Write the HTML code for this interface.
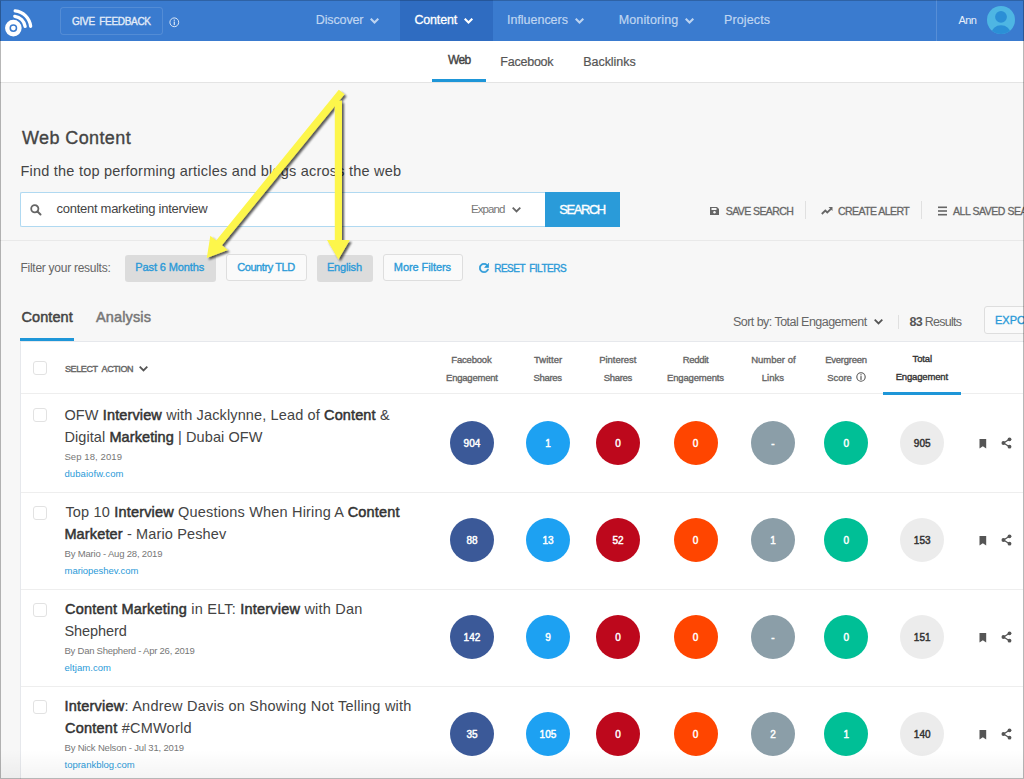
<!DOCTYPE html>
<html><head><meta charset="utf-8">
<style>
*{margin:0;padding:0;box-sizing:border-box}
html,body{width:1024px;height:779px;overflow:hidden;background:#f7f7f7;font-family:"Liberation Sans",sans-serif;color:#444}
.a{position:absolute;white-space:nowrap}
#nav{position:absolute;left:0;top:0;width:1024px;height:41px;background:#3a7bcf}
#sub{position:absolute;left:0;top:41px;width:1024px;height:42px;background:#fff;border-bottom:1px solid #e4e4e4}
.navt{font-size:12.5px;color:#bfd5f1;top:13px;-webkit-text-stroke-width:0.2px}
.chev{position:absolute;width:6px;height:6px;border-right:2px solid currentColor;border-bottom:2px solid currentColor;transform:rotate(45deg)}
.btnf{position:absolute;height:27px;border-radius:3px;font-size:11px;-webkit-text-stroke-width:0.35px;color:#2b9ad8;text-align:center;line-height:27px}
.btnf.g{background:#dcdcdc}
.btnf.w{background:#fafafa;border:1px solid #dedede;line-height:25px}
.card{position:absolute;left:20px;top:341px;width:1010px;height:440px;background:#fff;border:1px solid #e6e8ec}
.hd{font-size:9.5px;-webkit-text-stroke-width:0.35px;color:#666;text-align:center;line-height:18px}
.row{position:absolute;left:0;width:1010px;border-top:1px solid #eeeeee}
.cb{position:absolute;width:14.3px;height:14.3px;border:1px solid #e2e2e2;border-radius:3px;background:#fff}
.ttl{font-size:14.5px;line-height:21px;color:#444}
.ttl b{color:#333;font-weight:normal;-webkit-text-stroke-width:0.5px}
.meta{font-size:9.5px;color:#777}
.dom{font-size:9.5px;color:#2b9ad8}
.fb{background:#3b5998}.tw{background:#1da1f2}.pi{background:#bd081c}.rd{background:#ff4500}.ln{background:#8b9ea8}.ev{background:#00bf96}.tt{background:#ececec;color:#333!important}
.c{position:absolute;width:44px;height:44px;border-radius:50%;color:#fff;font-size:10px;-webkit-text-stroke-width:0.45px;text-align:center;line-height:45px;letter-spacing:0.1px;text-indent:0.1px}
/*FIT*/#n1{letter-spacing:-0.13px;transform:translate(-0.2px,0.0px)}
#n2{letter-spacing:-0.16px;transform:translate(0.4px,0.0px)}
#n3{letter-spacing:-0.02px;transform:translate(-1.0px,0.0px)}
#n4{letter-spacing:0.13px;transform:translate(-0.3px,0.0px)}
#n5{letter-spacing:0.12px;transform:translate(-1.0px,0.0px)}
#gf{letter-spacing:-0.30px;transform:translate(-0.1px,1.0px)}
#ann{letter-spacing:-0.64px;transform:translate(0.6px,1.0px)}
#s1{letter-spacing:-0.70px;transform:translate(1.0px,0.0px)}
#s2{letter-spacing:-0.23px;transform:translate(0.3px,1.0px)}
#s3{letter-spacing:-0.03px;transform:translate(0.2px,1.0px)}
#wc{letter-spacing:0.39px;transform:translate(1.0px,1.0px)}
#find{letter-spacing:0.22px;transform:translate(-0.5px,1.0px)}
#q{letter-spacing:-0.27px;transform:translate(0.5px,-1.0px)}
#srch{letter-spacing:-1.42px;transform:translate(-0.5px,0.0px)}
#exp{letter-spacing:-0.90px;transform:translate(0.0px,0.0px)}
#sav{letter-spacing:-0.57px;transform:translate(0.7px,0.0px)}
#cre{letter-spacing:-0.55px;transform:translate(0.0px,0.0px)}
#flt{letter-spacing:-0.27px;transform:translate(-0.5px,-1.0px)}
#f1{letter-spacing:-0.12px;transform:translate(-0.8px,-1.0px)}
#f2{letter-spacing:-0.41px;transform:translate(-0.5px,0.0px)}
#f3{letter-spacing:-0.16px;transform:translate(-0.6px,-1.0px)}
#f4{letter-spacing:-0.08px;transform:translate(-0.6px,0.0px)}
#rst{letter-spacing:-0.49px;transform:translate(0.2px,1.0px)}
#tc{letter-spacing:0.07px;transform:translate(0.5px,1.0px)}
#ta{letter-spacing:0.13px;transform:translate(1.0px,1.0px)}
#sort{letter-spacing:-0.54px;transform:translate(-0.0px,1.0px)}
#res{letter-spacing:-0.72px;transform:translate(0.5px,1.0px)}
#sel{letter-spacing:-0.40px;transform:translate(-0.0px,0.0px)}
#h0a{letter-spacing:-0.19px;transform:translate(-0.5px,0.0px)}
#h0b{letter-spacing:-0.22px;transform:translate(-0.0px,1.0px)}
#h1a{letter-spacing:0.01px;transform:translate(0.0px,0.0px)}
#h1b{letter-spacing:-0.31px;transform:translate(-0.5px,1.0px)}
#h2a{letter-spacing:-0.05px;transform:translate(0.0px,0.0px)}
#h2b{letter-spacing:-0.30px;transform:translate(0.0px,1.0px)}
#h3a{letter-spacing:-0.30px;transform:translate(0.0px,0.0px)}
#h3b{letter-spacing:-0.16px;transform:translate(0.0px,1.0px)}
#h4a{letter-spacing:0.00px;transform:translate(0.0px,0.0px)}
#h4b{letter-spacing:0.02px;transform:translate(-0.5px,1.0px)}
#h5a{letter-spacing:-0.26px;transform:translate(-0.0px,0.0px)}
#h5b{letter-spacing:-0.09px;transform:translate(-6.5px,1.0px)}
#h6a{letter-spacing:-0.14px;transform:translate(0.5px,-1.0px)}
#h6b{letter-spacing:-0.16px;transform:translate(0.0px,0.0px)}
#r0a{letter-spacing:0.13px;transform:translate(-0.6px,0.0px)}
#r0b{letter-spacing:0.09px;transform:translate(-0.6px,1.0px)}
#r0c{letter-spacing:0.09px;transform:translate(-0.6px,1.0px)}
#r0d{letter-spacing:0.09px;transform:translate(-0.6px,1.0px)}
#r1a{letter-spacing:0.18px;transform:translate(0.4px,0.0px)}
#r1b{letter-spacing:0.14px;transform:translate(-0.6px,1.0px)}
#r1c{letter-spacing:-0.18px;transform:translate(-0.5px,1.0px)}
#r1d{letter-spacing:-0.03px;transform:translate(-0.5px,1.0px)}
#r2a{letter-spacing:0.21px;transform:translate(0.0px,0.0px)}
#r2b{letter-spacing:-0.08px;transform:translate(-0.5px,1.0px)}
#r2c{letter-spacing:-0.24px;transform:translate(-0.5px,1.0px)}
#r2d{letter-spacing:0.06px;transform:translate(-0.5px,1.0px)}
#r3a{letter-spacing:0.22px;transform:translate(-0.5px,0.0px)}
#r3b{letter-spacing:0.23px;transform:translate(0.0px,1.0px)}
#r3c{letter-spacing:-0.18px;transform:translate(-0.5px,1.0px)}
#r3d{letter-spacing:0.00px;transform:translate(-0.5px,1.0px)}/*ENDFIT*/
</style></head><body>
<!-- NAV -->
<div id="nav">
  <svg class="a" style="left:0;top:0" width="40" height="40" viewBox="0 0 40 40">
    <circle cx="13.35" cy="28.1" r="6.1" fill="none" stroke="#fff" stroke-width="4.4"/>
    <circle cx="13.35" cy="28.1" r="2.4" fill="#fff"/>
    <path d="M14.8 16.29A11.9 11.9 0 0 1 25.13 26.44" fill="none" stroke="#fff" stroke-width="3.3" stroke-linecap="round"/>
    <path d="M15.17 10.8A17.4 17.4 0 0 1 30.65 26.28" fill="none" stroke="#fff" stroke-width="3.3" stroke-linecap="round"/>
  </svg>
  <div class="a" style="left:60px;top:7px;width:103px;height:28px;border:1px solid rgba(255,255,255,0.13);border-radius:3px;font-size:10px;-webkit-text-stroke-width:0.35px;color:#e3ecf8;text-align:center;line-height:26px;word-spacing:2px"><span id="gf" style="display:inline-block">GIVE FEEDBACK</span></div>
  <svg class="a" style="left:169px;top:17px" width="11" height="11" viewBox="0 0 11 11"><circle cx="5.3" cy="5.3" r="4.4" fill="none" stroke="#dce8f7" stroke-width="1"/><rect x="4.7" y="2.6" width="1.2" height="1.2" fill="#dce8f7"/><rect x="4.7" y="4.5" width="1.2" height="3.6" fill="#dce8f7"/></svg>

  <div id="n1" class="a navt" style="left:316px">Discover</div>
  <svg class="a" style="left:370px;top:17.5px" width="10" height="7" viewBox="0 0 10 7"><path d="M0.7 0.7L4.5 4.5L8.3 0.7" fill="none" stroke="#bcd3f0" stroke-width="2.1"/></svg>
  <div class="a" style="left:400px;top:0;width:93px;height:41px;background:#2f6cc1"></div>
  <div id="n2" class="a navt" style="left:414px;color:#fff;-webkit-text-stroke-width:0.3px">Content</div>
  <svg class="a" style="left:464px;top:17.5px" width="10" height="7" viewBox="0 0 10 7"><path d="M0.7 0.7L4.5 4.5L8.3 0.7" fill="none" stroke="#fff" stroke-width="2.1"/></svg>
  <div id="n3" class="a navt" style="left:508px">Influencers</div>
  <svg class="a" style="left:575px;top:17.5px" width="10" height="7" viewBox="0 0 10 7"><path d="M0.7 0.7L4.5 4.5L8.3 0.7" fill="none" stroke="#bcd3f0" stroke-width="2.1"/></svg>
  <div id="n4" class="a navt" style="left:619px">Monitoring</div>
  <svg class="a" style="left:685px;top:17.5px" width="10" height="7" viewBox="0 0 10 7"><path d="M0.7 0.7L4.5 4.5L8.3 0.7" fill="none" stroke="#bcd3f0" stroke-width="2.1"/></svg>
  <div id="n5" class="a navt" style="left:725px">Projects</div>
  <div class="a" style="left:936px;top:0;width:1px;height:41px;background:rgba(255,255,255,0.15)"></div>
  <div id="ann" class="a" style="left:958px;top:13px;font-size:11px;color:#e6eefa">Ann</div>
  <svg class="a" style="left:987px;top:6px" width="28" height="28" viewBox="0 0 28 28">
    <defs><clipPath id="av"><circle cx="14" cy="14" r="14"/></clipPath></defs>
    <circle cx="14" cy="14" r="14" fill="#4eb6e3"/>
    <g clip-path="url(#av)"><circle cx="14" cy="10.8" r="5.9" fill="#2b8fd6"/><ellipse cx="14" cy="27.3" rx="9.6" ry="8" fill="#2b8fd6"/></g>
  </svg>
</div>
<!-- SUBNAV -->
<div id="sub">
  <div class="a" style="left:447px;top:12px;font-size:12px;-webkit-text-stroke-width:0.4px;color:#444" id="s1">Web</div>
  <div class="a" style="left:432px;top:38px;width:54px;height:3px;background:#1e96d8"></div>
  <div class="a" style="left:500px;top:13px;font-size:12.5px;color:#555;-webkit-text-stroke-width:0.2px" id="s2">Facebook</div>
  <div class="a" style="left:583px;top:13px;font-size:12.5px;color:#555;-webkit-text-stroke-width:0.2px" id="s3">Backlinks</div>
</div>

<!-- TITLE -->
<div class="a" style="left:21px;top:127px;font-size:18px;-webkit-text-stroke-width:0.35px;color:#444" id="wc">Web Content</div>
<div class="a" style="left:21px;top:162px;font-size:14.5px;color:#444" id="find">Find the top performing articles and blogs across the web</div>

<!-- SEARCH -->
<div class="a" style="left:20px;top:192px;width:526px;height:35px;background:#fff;border:1px solid #b0d9f1;border-right:none;border-radius:2px 0 0 2px"></div>
<svg class="a" style="left:29.7px;top:203.8px" width="12" height="12" viewBox="0 0 12 12"><circle cx="4.8" cy="4.8" r="3.6" fill="none" stroke="#666" stroke-width="1.8"/><path d="M7.5 7.5 L10.5 10.5" stroke="#666" stroke-width="2" stroke-linecap="round"/></svg>
<div class="a" style="left:56px;top:202px;font-size:13px;color:#444" id="q">content marketing interview</div>
<div class="a" style="left:471px;top:203px;font-size:11.5px;color:#777" id="exp">Expand</div>
<svg class="a" style="left:512px;top:207px" width="10" height="7" viewBox="0 0 10 7"><path d="M0.7 0.7L4.5 4.5L8.3 0.7" fill="none" stroke="#666" stroke-width="1.8"/></svg>
<div class="a" style="left:545px;top:192px;width:75px;height:35px;background:#2a9bd9;color:#fff;font-size:13px;-webkit-text-stroke-width:0.35px;text-align:center;line-height:35px"><span id="srch" style="display:inline-block">SEARCH</span></div>

<!-- SAVE etc -->
<svg class="a" style="left:710px;top:207px" width="9" height="8" viewBox="0 0 9 8"><path d="M0 0H7L9 2V8H0Z" fill="#666"/><rect x="1.5" y="1" width="5" height="2" fill="#f7f7f7"/><circle cx="4.5" cy="5.3" r="1.2" fill="#f7f7f7"/></svg>
<div class="a" style="left:725px;top:205px;font-size:10.5px;color:#666;-webkit-text-stroke-width:0.3px" id="sav">SAVE SEARCH</div>
<div class="a" style="left:805px;top:201px;width:1px;height:18px;background:#e0e0e0"></div>
<svg class="a" style="left:821px;top:206px" width="12" height="9" viewBox="0 0 12 9"><path d="M0.8 8 L4.3 4.5 L6.3 6.5 L10.5 2.3" fill="none" stroke="#666" stroke-width="1.8"/><path d="M7.5 1 H11.5 V5 Z" fill="#666"/></svg>
<div class="a" style="left:838px;top:205px;font-size:10.5px;color:#666;-webkit-text-stroke-width:0.3px" id="cre">CREATE ALERT</div>
<div class="a" style="left:921px;top:201px;width:1px;height:18px;background:#e0e0e0"></div>
<svg class="a" style="left:938px;top:206px" width="9" height="10" viewBox="0 0 9 10"><rect y="0.5" width="9" height="1.6" fill="#666"/><rect y="4.2" width="9" height="1.6" fill="#666"/><rect y="7.9" width="9" height="1.6" fill="#666"/></svg>
<div class="a" style="left:953px;top:205px;font-size:10.5px;color:#666;-webkit-text-stroke-width:0.3px;letter-spacing:-0.45px" id="all">ALL SAVED SEARCHES</div>
<div class="a" style="left:0;top:240px;width:1024px;height:1px;background:#e9e9e9"></div>

<!-- FILTERS -->
<div class="a" style="left:21px;top:262px;font-size:12px;color:#666" id="flt">Filter your results:</div>
<div class="btnf g" style="left:125px;top:255px;width:91px"><span id="f1" style="display:inline-block">Past 6 Months</span></div>
<div class="btnf w" style="left:226px;top:254px;width:81px"><span id="f2" style="display:inline-block">Country TLD</span></div>
<div class="btnf g" style="left:317px;top:255px;width:56px"><span id="f3" style="display:inline-block">English</span></div>
<div class="btnf w" style="left:383px;top:254px;width:80px"><span id="f4" style="display:inline-block">More Filters</span></div>
<svg class="a" style="left:478.8px;top:262.8px" width="10" height="10" viewBox="3.5 3.5 17 17"><path d="M17.65 6.35C16.2 4.9 14.21 4 12 4c-4.42 0-7.99 3.58-7.99 8s3.57 8 7.99 8c3.73 0 6.84-2.550 7.73-6h-2.080c-.82 2.33-3.04 4-5.65 4-3.31 0-6-2.69-6-6s2.69-6 6-6c1.66 0 3.14.69 4.22 1.78L13 11h7V4l-2.35 2.35z" fill="#2b9ad8" stroke="#2b9ad8" stroke-width="1.1"/></svg>
<div class="a" style="left:494px;top:262px;font-size:10px;-webkit-text-stroke-width:0.35px;color:#2b9ad8;word-spacing:2px" id="rst">RESET FILTERS</div>

<!-- TABS -->
<div class="a" style="left:21px;top:308px;font-size:14.5px;-webkit-text-stroke-width:0.5px;color:#444" id="tc">Content</div>
<div class="a" style="left:95px;top:308px;font-size:14.5px;-webkit-text-stroke-width:0.5px;color:#777" id="ta">Analysis</div>
<div class="a" style="left:20px;top:338px;width:54px;height:3px;background:#1e96d8"></div>
<div class="a" style="left:733px;top:314px;font-size:12.5px;color:#666" id="sort">Sort by: Total Engagement</div>
<svg class="a" style="left:873.5px;top:319.3px" width="10" height="7" viewBox="0 0 10 7"><path d="M0.7 0.7L4.5 4.5L8.3 0.7" fill="none" stroke="#555" stroke-width="1.8"/></svg>
<div class="a" style="left:898px;top:315px;width:1px;height:14px;background:#e0e0e0"></div>
<div class="a" style="left:909px;top:314px;font-size:12.5px;color:#666" id="res"><b style="color:#555">83</b> Results</div>
<div class="a" style="left:984px;top:306px;width:60px;height:28px;background:#fafafa;border:1px solid #dedede;border-radius:3px;font-size:11px;-webkit-text-stroke-width:0.35px;color:#2b9ad8;line-height:26px;padding-left:10px">EXPORT</div>

<!-- CARD -->
<div class="card">
  <div class="cb" style="left:12px;top:19px"></div>
  <div class="a" style="left:44px;top:22px;font-size:9px;-webkit-text-stroke-width:0.4px;color:#666;word-spacing:2.5px" id="sel">SELECT ACTION</div>
  
</div>
<div class="a hd" id="h0a" style="left:421.9px;top:351px;width:100px">Facebook</div>
<div class="a hd" id="h0b" style="left:421.9px;top:368px;width:100px">Engagement</div>
<div class="a hd" id="h1a" style="left:498.1px;top:351px;width:100px">Twitter</div>
<div class="a hd" id="h1b" style="left:498.1px;top:368px;width:100px">Shares</div>
<div class="a hd" id="h2a" style="left:567.8px;top:351px;width:100px">Pinterest</div>
<div class="a hd" id="h2b" style="left:567.8px;top:368px;width:100px">Shares</div>
<div class="a hd" id="h3a" style="left:645.5px;top:351px;width:100px">Reddit</div>
<div class="a hd" id="h3b" style="left:645.5px;top:368px;width:100px">Engagements</div>
<div class="a hd" id="h4a" style="left:723.4px;top:351px;width:100px">Number of</div>
<div class="a hd" id="h4b" style="left:723.4px;top:368px;width:100px">Links</div>
<div class="a hd" id="h5a" style="left:796.0px;top:351px;width:100px">Evergreen</div>
<div class="a hd" id="h5b" style="left:796.0px;top:368px;width:100px">Score</div>
<div class="a hd" id="h6a" style="left:871.8px;top:351px;width:100px;color:#333">Total</div>
<div class="a hd" id="h6b" style="left:871.8px;top:368px;width:100px;color:#333">Engagement</div>
<svg class="a" style="left:855.5px;top:372px" width="10" height="10" viewBox="0 0 10 10"><circle cx="5" cy="5" r="4.2" fill="none" stroke="#555" stroke-width="1.1"/><rect x="4.4" y="2.2" width="1.2" height="1.2" fill="#555"/><rect x="4.4" y="4.1" width="1.2" height="3.8" fill="#555"/></svg>
<div class="a" style="left:21px;top:393px;width:1002px;height:1px;background:#eeeeee"></div>
<div class="a" style="left:883px;top:392px;width:78px;height:3px;background:#1e96d8"></div>
<svg class="a" style="left:138.5px;top:365.5px" width="10" height="7" viewBox="0 0 10 7"><path d="M0.7 0.7L4.5 4.5L8.3 0.7" fill="none" stroke="#555" stroke-width="1.8"/></svg>
<div id="rows">
<div class="cb" style="left:32.7px;top:408.2px"></div>
<div class="a ttl" id="r0a" style="left:65px;top:405px">OFW <b>Interview</b> with Jacklynne, Lead of <b>Content</b> &amp;</div>
<div class="a ttl" id="r0b" style="left:65px;top:426px">Digital <b>Marketing</b> | Dubai OFW</div>
<div class="a meta" id="r0c" style="left:65px;top:450px">Sep 18, 2019</div>
<div class="a dom" id="r0d" style="left:65px;top:467px">dubaiofw.com</div>
<div class="c fb" style="left:450px;top:421px">904</div>
<div class="c tw" style="left:526px;top:421px">1</div>
<div class="c pi" style="left:596px;top:421px">0</div>
<div class="c rd" style="left:673.5px;top:421px">0</div>
<div class="c ln" style="left:751px;top:421px">-</div>
<div class="c ev" style="left:824.3px;top:421px">0</div>
<div class="c tt" style="left:900.2px;top:421px">905</div>
<svg class="a" style="left:979px;top:439px" width="8" height="10" viewBox="0 0 8 10"><path d="M0.5 0H7.2V9.6L3.85 7.2L0.5 9.6Z" fill="#555"/></svg>
<svg class="a" style="left:1001px;top:437px" width="11" height="12" viewBox="0 0 11 12"><path d="M8.5 2.3L2.5 6L8.5 9.7" fill="none" stroke="#555" stroke-width="1.3"/><circle cx="8.5" cy="2.3" r="1.9" fill="#555"/><circle cx="2.4" cy="6" r="1.9" fill="#555"/><circle cx="8.5" cy="9.7" r="1.9" fill="#555"/></svg>
<div class="cb" style="left:32.7px;top:505.5px"></div>
<div class="a ttl" id="r1a" style="left:65px;top:502px">Top 10 <b>Interview</b> Questions When Hiring A <b>Content</b></div>
<div class="a ttl" id="r1b" style="left:65px;top:523px"><b>Marketer</b> - Mario Peshev</div>
<div class="a meta" id="r1c" style="left:65px;top:547px">By Mario - Aug 28, 2019</div>
<div class="a dom" id="r1d" style="left:65px;top:564px">mariopeshev.com</div>
<div class="c fb" style="left:450px;top:518px">88</div>
<div class="c tw" style="left:526px;top:518px">13</div>
<div class="c pi" style="left:596px;top:518px">52</div>
<div class="c rd" style="left:673.5px;top:518px">0</div>
<div class="c ln" style="left:751px;top:518px">1</div>
<div class="c ev" style="left:824.3px;top:518px">0</div>
<div class="c tt" style="left:900.2px;top:518px">153</div>
<svg class="a" style="left:979px;top:536px" width="8" height="10" viewBox="0 0 8 10"><path d="M0.5 0H7.2V9.6L3.85 7.2L0.5 9.6Z" fill="#555"/></svg>
<svg class="a" style="left:1001px;top:534px" width="11" height="12" viewBox="0 0 11 12"><path d="M8.5 2.3L2.5 6L8.5 9.7" fill="none" stroke="#555" stroke-width="1.3"/><circle cx="8.5" cy="2.3" r="1.9" fill="#555"/><circle cx="2.4" cy="6" r="1.9" fill="#555"/><circle cx="8.5" cy="9.7" r="1.9" fill="#555"/></svg>
<div class="a" style="left:21px;top:492px;width:1002px;height:1px;background:#eeeeee"></div>
<div class="cb" style="left:32.7px;top:602.8px"></div>
<div class="a ttl" id="r2a" style="left:65px;top:599px"><b>Content Marketing</b> in ELT: <b>Interview</b> with Dan</div>
<div class="a ttl" id="r2b" style="left:65px;top:620px">Shepherd</div>
<div class="a meta" id="r2c" style="left:65px;top:644px">By Dan Shepherd - Apr 26, 2019</div>
<div class="a dom" id="r2d" style="left:65px;top:661px">eltjam.com</div>
<div class="c fb" style="left:450px;top:615px">142</div>
<div class="c tw" style="left:526px;top:615px">9</div>
<div class="c pi" style="left:596px;top:615px">0</div>
<div class="c rd" style="left:673.5px;top:615px">0</div>
<div class="c ln" style="left:751px;top:615px">-</div>
<div class="c ev" style="left:824.3px;top:615px">0</div>
<div class="c tt" style="left:900.2px;top:615px">151</div>
<svg class="a" style="left:979px;top:633px" width="8" height="10" viewBox="0 0 8 10"><path d="M0.5 0H7.2V9.6L3.85 7.2L0.5 9.6Z" fill="#555"/></svg>
<svg class="a" style="left:1001px;top:631px" width="11" height="12" viewBox="0 0 11 12"><path d="M8.5 2.3L2.5 6L8.5 9.7" fill="none" stroke="#555" stroke-width="1.3"/><circle cx="8.5" cy="2.3" r="1.9" fill="#555"/><circle cx="2.4" cy="6" r="1.9" fill="#555"/><circle cx="8.5" cy="9.7" r="1.9" fill="#555"/></svg>
<div class="a" style="left:21px;top:589px;width:1002px;height:1px;background:#eeeeee"></div>
<div class="cb" style="left:32.7px;top:700.1px"></div>
<div class="a ttl" id="r3a" style="left:65px;top:696px"><b>Interview</b>: Andrew Davis on Showing Not Telling with</div>
<div class="a ttl" id="r3b" style="left:65px;top:717px"><b>Content</b> #CMWorld</div>
<div class="a meta" id="r3c" style="left:65px;top:741px">By Nick Nelson - Jul 31, 2019</div>
<div class="a dom" id="r3d" style="left:65px;top:758px">toprankblog.com</div>
<div class="c fb" style="left:450px;top:712px">35</div>
<div class="c tw" style="left:526px;top:712px">105</div>
<div class="c pi" style="left:596px;top:712px">0</div>
<div class="c rd" style="left:673.5px;top:712px">0</div>
<div class="c ln" style="left:751px;top:712px">2</div>
<div class="c ev" style="left:824.3px;top:712px">1</div>
<div class="c tt" style="left:900.2px;top:712px">140</div>
<svg class="a" style="left:979px;top:730px" width="8" height="10" viewBox="0 0 8 10"><path d="M0.5 0H7.2V9.6L3.85 7.2L0.5 9.6Z" fill="#555"/></svg>
<svg class="a" style="left:1001px;top:728px" width="11" height="12" viewBox="0 0 11 12"><path d="M8.5 2.3L2.5 6L8.5 9.7" fill="none" stroke="#555" stroke-width="1.3"/><circle cx="8.5" cy="2.3" r="1.9" fill="#555"/><circle cx="2.4" cy="6" r="1.9" fill="#555"/><circle cx="8.5" cy="9.7" r="1.9" fill="#555"/></svg>
<div class="a" style="left:21px;top:686px;width:1002px;height:1px;background:#eeeeee"></div>
</div><!--/rows-->

<!-- arrows -->
<svg id="arrows" class="a" style="left:0;top:0" width="1024" height="779" viewBox="0 0 1024 779">
<defs><filter id="sh" x="-20%" y="-20%" width="140%" height="140%"><feGaussianBlur in="SourceAlpha" stdDeviation="1.3"/><feOffset dx="1.8" dy="1.8" result="o"/><feComponentTransfer><feFuncA type="linear" slope="0.65"/></feComponentTransfer><feMerge><feMergeNode/><feMergeNode in="SourceGraphic"/></feMerge></filter></defs>
<g filter="url(#sh)" fill="#fdf64c">
<path d="M334.8 100.7H342V239.9H349.8L338.4 259.5L327 239.9H334.8Z"/>
<path d="M338.83 89.67L344.57 94.33L221.91 245.18L227.77 249.95L206.8 257.9L210.31 235.75L216.17 240.52Z"/>
</g></svg>
<div class="a" style="left:0;top:750px;width:1024px;height:28px;background:linear-gradient(to bottom,rgba(0,0,0,0),rgba(0,0,0,0.045))"></div>
<!-- frame -->
<div class="a" style="left:0;top:0;width:1024px;height:779px;border-left:1px solid rgba(0,0,0,0.28);border-top:1px solid rgba(0,0,0,0.2);border-right:1px solid rgba(0,0,0,0.28);border-bottom:1px solid rgba(0,0,0,0.28);height:779px"></div>
</body></html>
